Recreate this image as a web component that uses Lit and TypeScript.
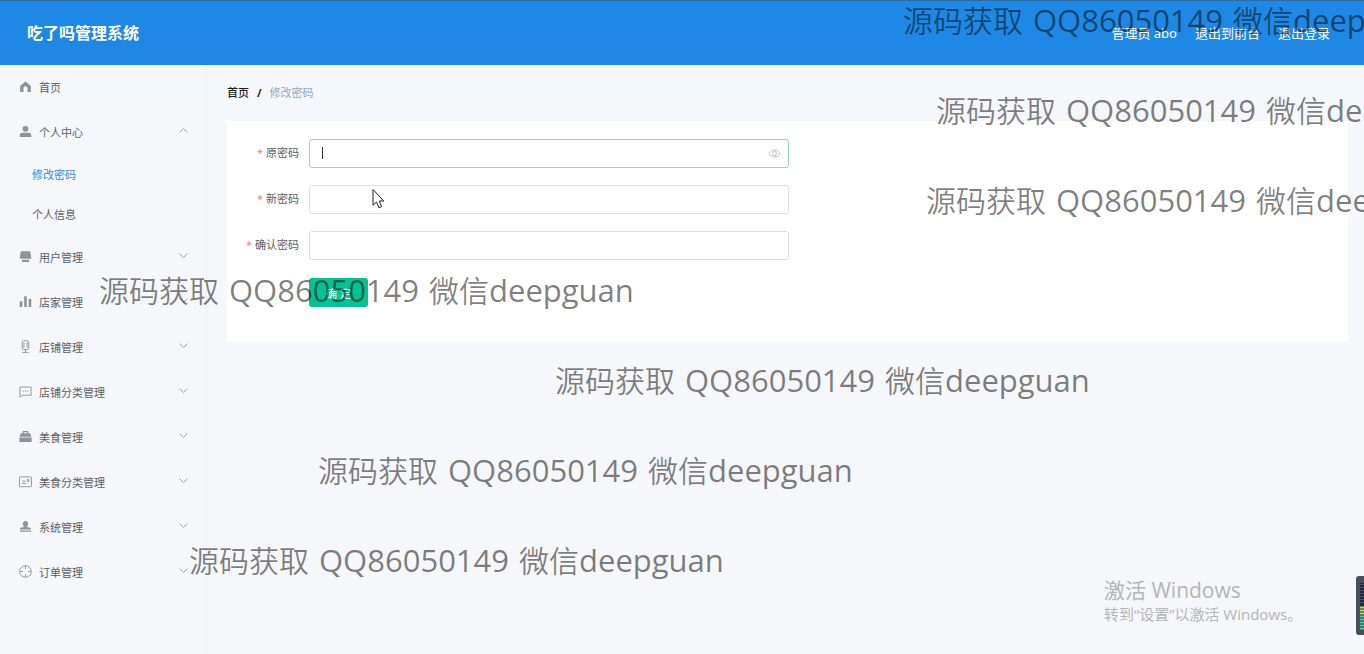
import { LitElement, html, css, svg, nothing } from "lit";
import { customElement, state } from "lit/decorators.js";

interface MenuItem {
  label: string;
  icon: string;
  children?: string[];
  arrow?: boolean;
}

const MENU: MenuItem[] = [
  { label: "首页", icon: "home" },
  { label: "个人中心", icon: "user", arrow: true, children: ["修改密码", "个人信息"] },
  { label: "用户管理", icon: "monitor", arrow: true },
  { label: "店家管理", icon: "bars", arrow: true },
  { label: "店铺管理", icon: "mic", arrow: true },
  { label: "店铺分类管理", icon: "chat", arrow: true },
  { label: "美食管理", icon: "case", arrow: true },
  { label: "美食分类管理", icon: "postcard", arrow: true },
  { label: "系统管理", icon: "stamp", arrow: true },
  { label: "订单管理", icon: "aim", arrow: true },
];

const ICONS: Record<string, unknown> = {
  home: svg`<path class="fill" d="M7 1.6 1.2 6.400V12.900H4.900V8.800a2.1 2.1 0 0 1 4.2 0v4.100h3.700V6.400z"/>`,
  user: svg`<circle class="fill" cx="7" cy="4.1" r="3.1"/><path class="fill" d="M.8 12.800v-1.400a3 3 0 0 1 3-3h6.400a3 3 0 0 1 3 3v1.400z"/>`,
  monitor: svg`<path class="fill" d="M2 1.400h10l1.200 6.600a1.200 1.200 0 0 1-1.200 1.400H2a1.200 1.200 0 0 1-1.200-1.400zM3.200 10.400h7.600v2.400H3.200z"/>`,
  bars: svg`<path class="fill" d="M.8 6.600h2.800v6.200H.8zM5.600 1.400h2.800v11.400H5.600zM10.400 4.400h2.800v8.400h-2.800z"/>`,
  mic: svg`<rect class="line" x="3.500" y=".8" width="7" height="9.400" rx="1.400"/><path class="line" d="M4 3.500h2.200M7.800 3.500H10M4 5.500h2.200M7.800 5.500H10M4 7.500h2.200M7.800 7.500H10M7 10v3M3.500 13.300h7"/>`,
  chat: svg`<path class="line" d="M1 13V2.200h12v8.800H4z"/><path class="line" d="M3.600 6.500h1.400M6.300 6.500h1.400M9 6.500h1.400"/>`,
  case: svg`<path class="fill" d="M4 3.600V1.200h6v2.400h2l1.400 3.800H.6L2 3.600zm1.200-1.200v1.200h3.600V2.400zM.4 8h13.200v4.800H.4z"/>`,
  postcard: svg`<rect class="line" x=".5" y="2" width="13" height="10.600" rx=".8"/><path class="line" d="M3.200 6.600h4M3.200 9h4.800M9 5h1.800v1.800H9z"/>`,
  stamp: svg`<path class="fill" d="M7 1a3 3 0 0 1 2.700 4c-.5 1.200-.8 1.600-.8 2.600l3.900.9v1.800H1.200V8.500l3.900-.9c0-1-.3-1.400-.8-2.600A3 3 0 0 1 7 1zM1 11.400h12v1.300H1z"/>`,
  aim: svg`<circle class="line" cx="7" cy="7" r="6.200"/><path class="line" d="M7 .8v3.400M7 9.800v3.400M.8 7h3.400M9.800 7h3.400"/>`,
};

const MARKS = ["m1", "m2", "m3", "m4", "m5", "m6", "m7"];

const FIELDS = [
  { id: "old", label: "原密码" },
  { id: "new", label: "新密码" },
  { id: "confirm", label: "确认密码" },
];

@customElement("app-root")
export class AppRoot extends LitElement {
  @state() private active = "修改密码";

  static styles = css`
    :host {
      display: block;
      position: relative;
      min-height: 100vh;
      overflow: hidden;
      background: #f6f7fa;
      color: #5c6066;
      font-family: "Noto Sans", "Noto Sans CJK SC", sans-serif;
      font-size: 11px;
    }
    * { box-sizing: border-box; }
    a { color: inherit; text-decoration: none; }
    .page { display: flex; flex-direction: column; min-height: 100vh; }
    .top {
      display: flex;
      align-items: center;
      justify-content: space-between;
      height: 65px;
      padding: 0 34px 2px 27px;
      border-top: 1px solid #2a6ca3;
      background: #1f88e5;
      color: #fff;
    }
    .brand { margin: 0; font-size: 16px; font-weight: 700; }
    .links { display: flex; gap: 18px; font-size: 13px; }
    .body { display: flex; flex: 1; }
    .side {
      flex: none;
      width: 207px;
      border-right: 1px solid #eceef3;
      background: #f5f7fb;
    }
    .menu, .sub { margin: 0; padding: 0; list-style: none; }
    .item {
      display: flex;
      align-items: center;
      gap: 7px;
      height: 45px;
      padding: 0 18px 2px 19px;
    }
    .icon { flex: none; width: 13px; height: 13px; }
    .fill { fill: #909399; fill-rule: evenodd; }
    .line { fill: none; stroke: #909399; stroke-width: 1; }
    .arrow {
      width: 9px;
      height: 9px;
      margin: 0 0 2px auto;
      fill: none;
      stroke: #a3a6ad;
    }
    .child { display: flex; align-items: center; height: 40px; padding: 0 0 2px 32px; }
    .on { color: #3a8ad8; }
    .main { flex: 1; min-width: 0; padding: 18px 16px 20px 20px; }
    .crumbs { display: flex; gap: 8px; height: 20px; line-height: 20px; color: #303133; }
    .here { color: #97a8be; }
    .strong { font-weight: 500; color: #1c1f24; }
    .slash { font-weight: 700; color: #1c1f24; }
    .card {
      display: flex;
      flex-direction: column;
      gap: 17px;
      margin-top: 18px;
      padding: 18px 0 35px;
      background: #fff;
    }
    .row { display: grid; grid-template-columns: 72px minmax(0, 480px); gap: 10px; align-items: center; }
    .actions { padding-top: 1px; }
    .label { padding-bottom: 3px; text-align: right; }
    .star { color: #ef8080; margin-right: 3px; }
    .box { position: relative; display: flex; }
    .input {
      width: 100%;
      height: 29px;
      padding: 0 32px 0 12px;
      border: 1px solid #dcdfe6;
      border-radius: 3px;
      outline: none;
      background: #fff;
      font: inherit;
      color: inherit;
    }
    .focus { border-color: #9fcbc4; }
    .caret { position: absolute; left: 13px; top: 8px; width: 1px; height: 12px; background: #333; }
    .eye {
      position: absolute;
      right: 8px;
      top: 8px;
      width: 13px;
      height: 13px;
      padding: 0;
      border: 0;
      background: none;
    }
    .eye svg { display: block; fill: none; stroke: #bcc0c8; }
    .submit {
      grid-column: 2;
      justify-self: start;
      width: 59px;
      height: 29px;
      padding: 0;
      border: 0;
      border-radius: 3px;
      background: #03c393;
      color: #fff;
      font: inherit;
    }
    .mark {
      position: absolute;
      display: flex;
      align-items: baseline;
      gap: 10px;
      line-height: 40px;
      font-size: 30px;
      white-space: nowrap;
      color: rgba(0, 0, 0, 0.5);
      font-family: "Noto Sans CJK SC", sans-serif;
      font-weight: 350;
      pointer-events: none;
    }
    .latin { font-family: "Open Sans", sans-serif; font-size: 31px; font-weight: 400; }
    .m1 { left: 903px; top: -1px; }
    .m2 { left: 936px; top: 89px; }
    .m3 { left: 926px; top: 179px; }
    .m4 { left: 99px; top: 269px; }
    .m5 { left: 555px; top: 359px; }
    .m6 { left: 318px; top: 449px; }
    .m7 { left: 189px; top: 539px; }
    .activate {
      position: absolute;
      right: 59px;
      bottom: 28px;
      width: 201px;
      color: #b3b5b9;
      font-family: "Open Sans", "Noto Sans CJK SC", sans-serif;
      font-size: 15px;
      line-height: 24px;
      white-space: nowrap;
    }
    .activate p { margin: 0; }
    .activate .big { font-size: 21px; }
    .pointer { position: absolute; left: 372px; top: 188px; width: 13px; height: 21px; }
    .meter { position: absolute; right: 0; bottom: 19px; width: 8px; height: 59px; }
  `;

  private pick(e: Event, label: string) {
    e.preventDefault();
    this.active = label;
  }

  private renderItem(m: MenuItem) {
    return html`<li>
      <a class="item" href="#">
        <svg class="icon" viewBox="0 0 14 14" aria-hidden="true">${ICONS[m.icon]}</svg>
        <span>${m.label}</span>
        ${m.arrow
          ? html`<svg class="arrow" viewBox="0 0 9 9" aria-hidden="true">
              <path d=${m.children ? "M.5 6.500 4.500 2.500 8.500 6.500" : "M.5 2.500 4.500 6.500 8.500 2.500"} />
            </svg>`
          : nothing}
      </a>
      ${m.children
        ? html`<ul class="sub">
            ${m.children.map(
              (c) => html`<li>
                <a class="child ${c === this.active ? "on" : ""}" href="#" @click=${(e: Event) => this.pick(e, c)}>${c}</a>
              </li>`
            )}
          </ul>`
        : nothing}
    </li>`;
  }

  render() {
    return html`
      <div class="page">
        <header class="top">
          <h1 class="brand">吃了吗管理系统</h1>
          <nav class="links">
            <span>管理员 abo</span>
            <a href="#">退出到前台</a>
            <a href="#">退出登录</a>
          </nav>
        </header>
        <div class="body">
          <nav class="side"><ul class="menu">${MENU.map((m) => this.renderItem(m))}</ul></nav>
          <main class="main">
            <nav class="crumbs">
              <a class="strong" href="#">首页</a><span class="slash">/</span><span class="here">修改密码</span>
            </nav>
            <form class="card" @submit=${(e: Event) => e.preventDefault()}>
              ${FIELDS.map(
                (f, i) => html`<div class="row">
                  <label class="label" for=${f.id}><span class="star">*</span>${f.label}</label>
                  <div class="box">
                    <input class="input ${i === 0 ? "focus" : ""}" id=${f.id} type="password" />
                    ${i === 0
                      ? html`<span class="caret"></span>
                          <button class="eye" type="button" aria-label="显示密码">
                            <svg viewBox="0 0 13 13" width="13" height="13">
                              <path d="M1 6.500C3.500 1.800 9.500 1.800 12 6.500 9.500 11.200 3.500 11.200 1 6.500z" />
                              <circle cx="6.500" cy="6.500" r="2" />
                            </svg>
                          </button>`
                      : nothing}
                  </div>
                </div>`
              )}
              <div class="row actions"><button class="submit" type="submit">确 定</button></div>
            </form>
          </main>
        </div>
      </div>
      ${MARKS.map(
        (m) => html`<div class="mark ${m}" aria-hidden="true">
          <span>源码获取</span><span class="latin">QQ86050149</span><span>微信<span class="latin">deepguan</span></span>
        </div>`
      )}
      <div class="activate">
        <p class="big">激活 Windows</p>
        <p>转到“设置”以激活 Windows。</p>
      </div>
      <svg class="pointer" viewBox="0 0 13 21" aria-hidden="true">
        <path d="M1 1.500V17.200L4.500 14 7 19.800 9.600 18.600 7.200 13H11.800z" fill="#fff" stroke="#222" />
      </svg>
      <svg class="meter" viewBox="0 0 8 59" aria-hidden="true">
        <path d="M8 0H3Q0 0 0 3V56Q0 59 3 59H8z" fill="#4b4f5c" />
        <path d="M4 7h4v46H4z" fill="#252a3a" />
        <path d="M4 8.500h4M4 11.500h4M4 14.500h4M4 17.500h4M4 20.500h4M4 23.500h4M4 26.500h4" stroke="#4b5268" />
        <path d="M4 31.500h4M4 34.500h4M4 37.500h4" stroke="#b5dc6c" stroke-width="2" />
        <path d="M4 40.500h4M4 43.500h4M4 46.500h4M4 49.500h4M4 52.500h4" stroke="#55cfa0" stroke-width="2" />
      </svg>
    `;
  }
}
